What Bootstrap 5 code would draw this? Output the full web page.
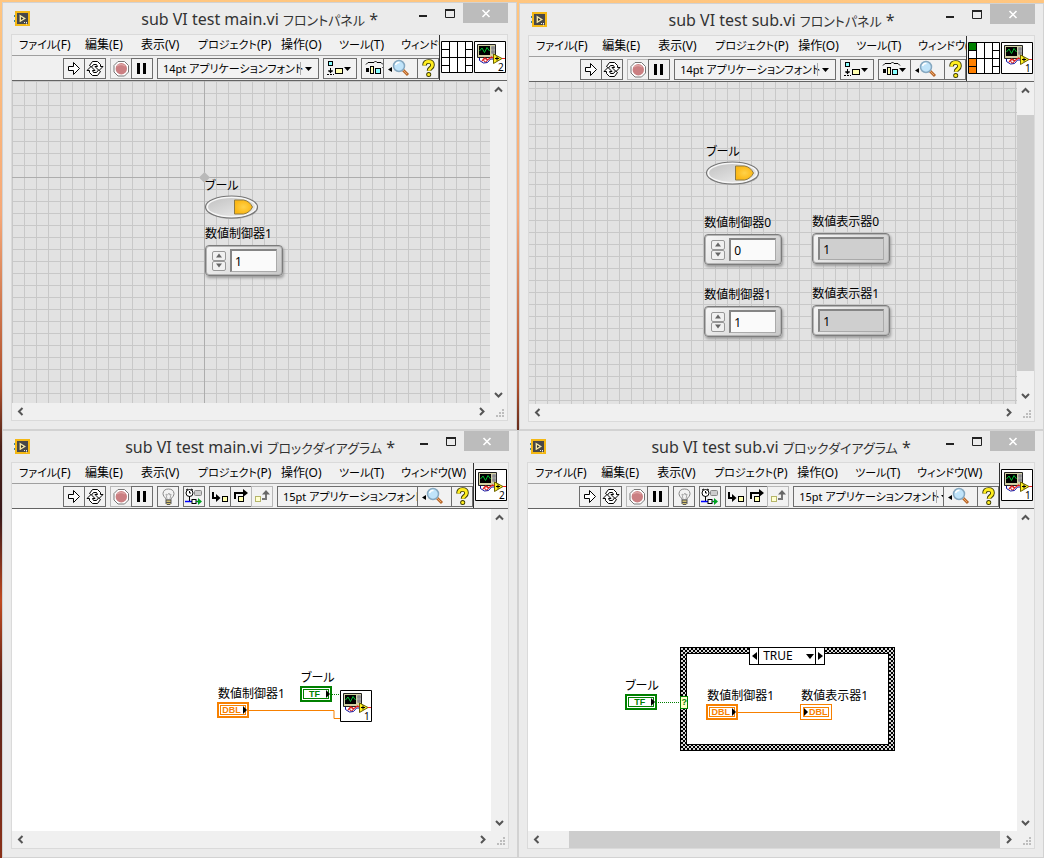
<!DOCTYPE html>
<html lang="ja">
<head>
<meta charset="utf-8">
<meta name="viewport" content="width=device-width, initial-scale=1">
<title>sub VI test</title>
<link href="https://cdn.jsdelivr.net/npm/bootstrap@5.3.0/dist/css/bootstrap.min.css" rel="stylesheet">
<style>
body{font-family:"Noto Sans","Noto Sans CJK JP",sans-serif;font-size:12px;line-height:16px;color:#000;font-feature-settings:"palt";
 background:linear-gradient(180deg,#ffc680 0,#f5a878 25%,#b0502c 45%,#4a2018 52%,#38181a 60%,#c04a20 70%,#5a2218 80%,#8a3018 100%)}
button,input,select{font:inherit;font-feature-settings:inherit;color:inherit;padding:0;border:0;background:none}
svg{display:block}
.desk{min-height:100vh;padding:2px 0 0 2px}
.vi-row{flex:1 1 0}
.row-top{gap:2px}
.win{background:#ebebeb;border:1px solid #d2d2d2;padding:0 8px 8px;min-width:0;display:flex;flex-direction:column}
.win-main{flex:515 1 0}
.win-sub{flex:525 1 0}
.row-top .win-sub{margin-top:1px;padding-bottom:7px}
.title{display:grid;grid-template-columns:1fr auto 1fr;height:31px}
.title h1{font-size:16px;line-height:20px;margin:6px 0 0;font-weight:400;color:#333;white-space:nowrap}
.title .kana{font-size:13px}
.menu .kana{font-size:11px}
.app-ico{margin:8px 0 0 3px}
.caps{display:flex;justify-content:flex-end;height:20px}
.caps button{width:27px;height:20px}
.caps .close-b{width:45px;background:#bcbcbc}
.client{border:1px solid #dadada;flex:1;display:flex;flex-direction:column}
.head{background:#f0f0f0;border-bottom:1px solid #646464;height:46px}
.menu{height:21px;border-bottom:1px solid #a0a0a0;display:grid;grid-template-columns:66px 56px 57px 83px 58px 62px 82px 60px;padding-left:7px;overflow:hidden}
.menu button{text-align:left;white-space:nowrap;line-height:18px;height:20px}
.tools{height:24px;align-items:flex-start;padding-top:2px}
.tools-l{gap:4px;padding-left:51px;overflow:hidden;min-width:0;flex:1}
.tb{height:21px;width:22px;flex:none;border:1px solid #6e6e6e;background:#f2f2f2;display:flex;align-items:center;justify-content:center}
.tb + .tb{margin-left:-1px}
.tb.off{border-color:#b8b8b8}
.tb.wide{width:34px}
.tb.find{width:35px}
.fontbox{position:relative;flex:none;width:162px;height:21px}
.fontbox select{appearance:none;width:100%;height:21px;border:1px solid #6e6e6e;background:#f2f2f2;padding:0 0 0 5px;font-size:11px;line-height:18px;border-radius:0}
.fontbox svg{position:absolute;right:0;top:0;pointer-events:none}
.pane{border-left:1px solid #333;padding:6px 1px 0;gap:1px;flex:none}
.work{flex:1;min-height:322px}
.canvas{position:relative;flex:1;min-width:0;overflow:hidden;background-color:#fff}
.grid{background-color:#e2e2e2;background-image:linear-gradient(#c8c8c8 1px,transparent 1px),linear-gradient(90deg,#c8c8c8 1px,transparent 1px);background-size:12px 12px}
.row-top .win-sub .grid{background-position:6px 6px}
.vbar{width:17px;background:#f0f0f0;display:flex;flex-direction:column;justify-content:space-between;align-items:center;flex:none}
.hbar{height:17px;background:#f0f0f0;display:flex;justify-content:space-between;align-items:center}
.bar-btn{width:17px;height:17px;display:flex;align-items:center;justify-content:center;flex:none}
.thumb{background:#cdcdcd}
.at{position:absolute}
.lbl{white-space:nowrap;line-height:16px;font-size:12px}
.axis-v{width:1px;top:0;bottom:0;background:#adadad}
.axis-h{height:1px;left:0;right:0;background:#adadad}
.num{width:78px;height:31px;border:1px solid #7c7c7c;border-radius:4px;background:linear-gradient(135deg,#f6f6f6,#c9c9c9);box-shadow:1px 2px 3px #9a9a9a,inset 0 0 0 1px #b4b4b4;display:flex;align-items:center;padding:0 5px 0 6px;gap:4px}
.num input{flex:1;min-width:0;height:23px;border:2px solid #858585;border-right:1px solid #aaa;border-bottom:1px solid #aaa;background:#fafafa;padding-left:3px;border-radius:0}
.num.ind{padding:0 5px}
.num.ind input{background:#cfcfcf;padding-left:3px}
.spin{width:14px;flex:none}
.spin button{height:10px;width:14px;border:1px solid #989898;border-radius:2px;background:#f0f0f0;display:flex;align-items:center;justify-content:center}
.node{width:32px;height:16px;border:2px solid;background:#fff;display:flex}
.node span{flex:1;margin:1px;border:1px solid;font:bold 9px/8px "Liberation Sans",sans-serif;text-align:center;padding-right:3px}
.node svg{position:absolute;right:0;top:2px}
.node.tf{color:#008000}
.node.dbl{color:#f78000}
.node.sink{border-width:1px}
.node.sink span{margin:2px;padding:0 0 0 4px}
.node.sink svg{right:auto;left:3px;top:3px}
.case{width:215px;height:104px;border:1px solid #000;padding:5px;background:repeating-conic-gradient(#000 0 25%,#d8d8d8 0 50%) 0 0/4px 4px}
.case-in{height:100%;border:1px solid #000;background:#fff}
.sel{width:76px;height:18px;border:1px solid #000;background:#fff;display:flex;align-items:stretch}
.sel button{width:8px;flex:none;display:flex;align-items:center;justify-content:center}
.sel select{appearance:none;flex:1;min-width:0;border:solid #000;border-width:0 1px;border-radius:0;padding-left:4px;line-height:16px;font-size:12px}
.sel .drop{position:absolute;right:10px;top:6px;pointer-events:none}
.tunnel{width:8px;height:13px;border:1px solid #008000;background:#ffffc8;color:#008000;font:bold 9px/11px "Liberation Sans",sans-serif;text-align:center}
</style>
</head>
<body>
<svg width="0" height="0" class="position-absolute" aria-hidden="true">
<defs>
<symbol id="app" viewBox="0 0 16 16"><path d="M0 5h2M0 10h2M14 8h2" stroke="#3a86a8" stroke-width="2"/><rect x="2" y="1" width="13" height="13" fill="#484848" stroke="#f4b814" stroke-width="2"/><path d="M5 4l6 4-6 4z" fill="#222"/><path d="M5.500 3.500l6.500 4-6.500 4z" fill="#f4e8a8"/><path d="M7 6l2.500 1.500L7 9z" fill="#333"/><path d="M10 11.500h4M12 13h2" stroke="#eee" stroke-dasharray="1 1"/></symbol>
<symbol id="min" viewBox="0 0 27 20"><path d="M10 13h8" stroke="#222" stroke-width="2"/></symbol>
<symbol id="max" viewBox="0 0 27 20"><path d="M9.500 7h9v7.500h-9z" fill="none" stroke="#222"/><path d="M9 7h10" stroke="#222" stroke-width="2"/></symbol>
<symbol id="cls" viewBox="0 0 45 20"><path d="M19.500 7l7 7M26.500 7l-7 7" stroke="#fff" stroke-width="1.600"/></symbol>
<symbol id="run" viewBox="0 0 20 19"><path d="M4.500 7.500h5v-4l6 6-6 6v-4h-5z" fill="#fff" stroke="#000"/></symbol>
<symbol id="cont" viewBox="0 0 20 19"><path d="M4.500 6.500l3-4h5l3 3v2h2.500l-4 4-4-4h2.500l-1-2h-3l-2 2.500z" fill="#fff" stroke="#000"/><path d="M15.500 12.500l-3 4h-5l-3-3v-2H2l4-4 4 4H7.500l1 2h3l2-2.500z" fill="#fff" stroke="#000"/></symbol>
<symbol id="abort" viewBox="0 0 20 19"><path d="M7 2.500h6.500l4 4v6.500l-4 4H7l-4-4V6.500z" fill="#fff" stroke="#777"/><circle cx="10.300" cy="9.800" r="5.700" fill="#cb7f82"/><path d="M6 7q4-3 8 0" stroke="#dda4a4" stroke-width="1.500" fill="none"/></symbol>
<symbol id="pause" viewBox="0 0 20 19"><path d="M5 4h3v11H5zM11 4h3v11h-3z"/></symbol>
<symbol id="bulb" viewBox="0 0 20 19"><path d="M8 13q0-2-2-3.500-1-1.500-1-3 .5-4.500 5.500-4.500t5.500 4.500q0 1.500-1 3Q13 11 13 13z" fill="#f2f2f2" stroke="#888"/><path d="M9 12l-1-5 1.500 1L11 6l.8 2L13 7l-1 5" fill="none" stroke="#aaa"/><path d="M8 13h5v3.500l-1 1H9l-1-1z" fill="#d2c070" stroke="#555"/><path d="M8 15.500h5" stroke="#555"/></symbol>
<symbol id="retain" viewBox="0 0 20 19"><circle cx="5.500" cy="6" r="3.500" fill="#fff" stroke="#000"/><path d="M5.500 4v2H7M2 3l2-1M9 3L7 2M5.500 9v5" stroke="#000" fill="none"/><rect x="10.500" y="3.500" width="7" height="5" rx="1" fill="#ccc" stroke="#888"/><path d="M1 14.500h15" stroke="#00f" stroke-width="1.500"/><rect x="8" y="12.500" width="4" height="4" fill="#fff" stroke="#000"/><path d="M12 14.500h3" stroke="#090"/><path d="M14 11l4 3.500-4 3.500z" fill="#00a020"/></symbol>
<symbol id="into" viewBox="0 0 20 19"><path d="M3 5v6h4" stroke="#000" stroke-width="2" fill="none"/><path d="M6 7l4.500 4L6 15z"/><rect x="12.500" y="9.500" width="5" height="5" fill="#ffffb0" stroke="#000"/></symbol>
<symbol id="over" viewBox="0 0 20 19"><path d="M4 12V6h9" stroke="#000" stroke-width="2" fill="none"/><path d="M12 2l5 4-5 4z"/><rect x="7.500" y="9.500" width="5" height="5" fill="#ffffb0" stroke="#000"/></symbol>
<symbol id="out" viewBox="0 0 20 19"><rect x="3.500" y="9.500" width="5" height="5" fill="#ffffd0" stroke="#b5b56a"/><path d="M10 12h4V6" stroke="#777" stroke-width="2" fill="none"/><path d="M10 7.500L14 3l4 4.500z" fill="#666"/></symbol>
<symbol id="align" viewBox="0 0 32 19"><rect x="4.500" y="2.500" width="4" height="4" fill="#8ff" stroke="#000"/><path d="M6.500 9v5M4 12h5" stroke="#000"/><path d="M4.500 11.500h4l-2 3zM20 8h7l-3.500 4z"/><path d="M3 15.500h7" stroke="#000" stroke-dasharray="2 1"/><rect x="11.500" y="9.500" width="7" height="5" fill="#ffffb0" stroke="#000"/></symbol>
<symbol id="dist" viewBox="0 0 32 19"><path d="M4 5.500L6 3.500h6L13.500 2l1.500 1.500h4l2 2" stroke="#000" fill="none"/><path d="M4 9h3v4H4zM20 8h7l-3.500 4z"/><rect x="8.500" y="7.500" width="3" height="7" fill="#ffffb0" stroke="#000"/><rect x="13.500" y="9.500" width="5" height="5" fill="#8ff" stroke="#000"/></symbol>
<symbol id="find" viewBox="0 0 33 19"><path d="M4 10.500l4-2.500v5z"/><path d="M18 10l6 6" stroke="#b8682c" stroke-width="3"/><path d="M18 10l5 5" stroke="#f0a868"/><circle cx="15" cy="7" r="5.500" fill="#c0e4fa" stroke="#86a8c0" stroke-width="1.500"/><path d="M11.500 6q1-3 4-2.500" stroke="#fff" stroke-width="1.500" fill="none"/></symbol>
<symbol id="help" viewBox="0 0 20 19"><path d="M6.500 6.500q0-4 4-4t4 3.500q0 2-2 3.300-1.500 1-1.500 2.500" stroke="#3a3a00" stroke-width="4.600" fill="none"/><circle cx="10.700" cy="15.500" r="2.500" fill="#3a3a00"/><path d="M6.500 6.500q0-4 4-4t4 3.500q0 2-2 3.300-1.500 1-1.500 2.500" stroke="#ffed20" stroke-width="2.800" fill="none"/><circle cx="10.700" cy="15.500" r="1.600" fill="#ffed20"/></symbol>
<symbol id="drop" viewBox="0 0 20 21"><path d="M1.500 4v13" stroke="#aaa"/><path d="M6 9h7l-3.500 4z"/></symbol>
<symbol id="vi" viewBox="0 0 32 32"><path d="M.5.5h31v31H.5z" fill="#fff" stroke="#000"/><path d="M3.500 3.500h18v13h-18z" fill="#d2d0a4" stroke="#222"/><path d="M5 5h11v9H5z" fill="#000"/><path d="M5.500 10l2.500-3 2.500 4.500L13 6.500l2.500 3.500" fill="none" stroke="#00c030"/><path d="M17 5h4v8h-4z" fill="#aaa"/><circle cx="19" cy="7" r="1" fill="#fff" stroke="#444" stroke-width=".7"/><circle cx="19" cy="11" r="1" fill="#fff" stroke="#444" stroke-width=".7"/><path d="M5.500 17v2.500l4 2.500 4-.5 3-3.500h3" fill="none" stroke="#1010a0"/><path d="M8 20l2.500-3 3 2 4-3 2 1M28 17.500h3" fill="none" stroke="#f02020" stroke-width="1.200"/><circle cx="11.500" cy="19" r="1.800" fill="none" stroke="#d02020"/><path d="M19.500 13v9.500l8.500-5z" fill="#ffef20" stroke="#6b6200"/><path d="M21 17.500h4M23 15.500v4" stroke="#000"/></symbol>
<symbol id="conn" viewBox="0 0 32 32"><path d="M.5.500h31v31H.5z" fill="#fff" stroke="none"/><path d="M.5.500h31v31H.5zM8.500 0v32M16.500 0v32M24.500 0v32M0 16.500h32M0 8.500h8.500M0 24.500h8.500M24.500 8.500H32M24.500 24.500H32" fill="none" stroke="#000"/></symbol>
<symbol id="up" viewBox="0 0 17 17"><path d="M5 10.500l3.500-3.500 3.500 3.500" fill="none" stroke="#555" stroke-width="2"/></symbol>
<symbol id="dn" viewBox="0 0 17 17"><path d="M5 7l3.500 3.500L12 7" fill="none" stroke="#555" stroke-width="2"/></symbol>
<symbol id="lf" viewBox="0 0 17 17"><path d="M10.500 5L7 8.500l3.500 3.500" fill="none" stroke="#555" stroke-width="2"/></symbol>
<symbol id="rt" viewBox="0 0 17 17"><path d="M7 5l3.500 3.500L7 12" fill="none" stroke="#555" stroke-width="2"/></symbol>
<symbol id="grip" viewBox="0 0 17 17"><path d="M12 6h2v2h-2zM9 9h2v2H9zM12 9h2v2h-2zM6 12h2v2H6zM9 12h2v2H9zM12 12h2v2h-2z" fill="#bdbdbd"/></symbol>
<symbol id="tu" viewBox="0 0 8 5"><path d="M1 4.500h6L4 .5z" fill="#666"/></symbol>
<symbol id="td" viewBox="0 0 8 5"><path d="M1 .5h6L4 4.500z" fill="#666"/></symbol>
<symbol id="term" viewBox="0 0 4 8"><path d="M0 0l4 4-4 4z" fill="#000"/></symbol>
<symbol id="oval" viewBox="0 0 54 24"><ellipse cx="27" cy="13" rx="26" ry="11" fill="#b5b5b5"/><ellipse cx="26.500" cy="12" rx="26" ry="11" fill="#f6f6f6" stroke="#757575" stroke-width="1.200"/><ellipse cx="26.500" cy="12" rx="23.500" ry="9" fill="url(#gg)"/><path d="M29.500 5h9q6 1 9 7-3 6-9 7h-9z" fill="url(#yy)" stroke="#8d7a45"/></symbol>
<linearGradient id="gg" x1="0" y1="0" x2="1" y2="1"><stop offset="0" stop-color="#c2c2c2"/><stop offset="1" stop-color="#eee"/></linearGradient>
<radialGradient id="yy"><stop offset="0" stop-color="#ffd24a"/><stop offset="1" stop-color="#fbb714"/></radialGradient>
</defs>
</svg>

<main class="desk d-flex flex-column">
<div class="vi-row row-top d-flex">

<section class="win win-main">
 <header class="title">
  <svg class="app-ico" width="16" height="16"><use href="#app"/></svg>
  <h1>sub VI test main.vi <span class="kana">フロントパネル</span> *</h1>
  <div class="caps"><button aria-label="最小化"><svg width="27" height="20"><use href="#min"/></svg></button><button aria-label="最大化"><svg width="27" height="20"><use href="#max"/></svg></button><button class="close-b" aria-label="閉じる"><svg width="45" height="20"><use href="#cls"/></svg></button></div>
 </header>
 <div class="client">
  <div class="head d-flex">
   <div class="flex-fill overflow-hidden">
    <nav class="menu"><button><span class="kana">ファイル</span>(F)</button><button>編集(E)</button><button>表示(V)</button><button><span class="kana">プロジェクト</span>(P)</button><button>操作(O)</button><button><span class="kana">ツール</span>(T)</button><button><span class="kana">ウィンドウ</span>(W)</button></nav>
    <div class="tools d-flex">
     <div class="tools-l d-flex">
      <div class="d-flex"><button class="tb" aria-label="実行"><svg width="20" height="19"><use href="#run"/></svg></button><button class="tb" aria-label="連続実行"><svg width="20" height="19"><use href="#cont"/></svg></button></div>
      <div class="d-flex"><button class="tb off" aria-label="中断"><svg width="20" height="19"><use href="#abort"/></svg></button><button class="tb" aria-label="一時停止"><svg width="20" height="19"><use href="#pause"/></svg></button></div>
      <div class="fontbox"><select aria-label="フォント"><option>14pt アプリケーションフォント</option></select><svg width="20" height="21"><use href="#drop"/></svg></div>
      <button class="tb wide m-0" aria-label="整列"><svg width="32" height="19"><use href="#align"/></svg></button>
      <button class="tb wide m-0" aria-label="間隔"><svg width="32" height="19"><use href="#dist"/></svg></button>
     </div>
     <button class="tb find" aria-label="検索"><svg width="33" height="19"><use href="#find"/></svg></button><button class="tb" aria-label="ヘルプ"><svg width="20" height="19"><use href="#help"/></svg></button>
    </div>
   </div>
   <div class="pane d-flex"><svg width="32" height="32"><use href="#conn"/></svg><svg width="32" height="32"><use href="#vi"/><text x="24" y="30" font-size="10">2</text></svg></div>
  </div>
  <div class="work d-flex">
   <div class="canvas grid">
    <div class="at axis-v" style="left:192px"></div><div class="at axis-h" style="top:96px"></div>
    <svg class="at" style="left:187px;top:91px" width="11" height="11"><path d="M5.500 0L11 5.500 5.500 11 0 5.500z" fill="#b9b9b9"/></svg>
    <span class="at lbl" id="m-bool" style="left:193px;top:97px">ブール</span>
    <button class="at" aria-labelledby="m-bool" style="left:193px;top:114px"><svg width="54" height="24"><use href="#oval"/></svg></button>
    <label class="at lbl" for="m1" style="left:193px;top:145px">数値制御器1</label>
    <div class="at num" style="left:193px;top:164px"><div class="spin"><button aria-label="増加"><svg width="8" height="5"><use href="#tu"/></svg></button><button aria-label="減少"><svg width="8" height="5"><use href="#td"/></svg></button></div><input id="m1" value="1"></div>
   </div>
   <div class="vbar"><button class="bar-btn" aria-label="上"><svg width="17" height="17"><use href="#up"/></svg></button><button class="bar-btn" aria-label="下"><svg width="17" height="17"><use href="#dn"/></svg></button></div>
  </div>
  <div class="hbar"><button class="bar-btn" aria-label="左"><svg width="17" height="17"><use href="#lf"/></svg></button><div class="flex-fill"></div><button class="bar-btn" aria-label="右"><svg width="17" height="17"><use href="#rt"/></svg></button><svg width="17" height="17"><use href="#grip"/></svg></div>
 </div>
</section>

<section class="win win-sub">
 <header class="title">
  <svg class="app-ico" width="16" height="16"><use href="#app"/></svg>
  <h1>sub VI test sub.vi <span class="kana">フロントパネル</span> *</h1>
  <div class="caps"><button aria-label="最小化"><svg width="27" height="20"><use href="#min"/></svg></button><button aria-label="最大化"><svg width="27" height="20"><use href="#max"/></svg></button><button class="close-b" aria-label="閉じる"><svg width="45" height="20"><use href="#cls"/></svg></button></div>
 </header>
 <div class="client">
  <div class="head d-flex">
   <div class="flex-fill overflow-hidden">
    <nav class="menu"><button><span class="kana">ファイル</span>(F)</button><button>編集(E)</button><button>表示(V)</button><button><span class="kana">プロジェクト</span>(P)</button><button>操作(O)</button><button><span class="kana">ツール</span>(T)</button><button><span class="kana">ウィンドウ</span>(W)</button></nav>
    <div class="tools d-flex">
     <div class="tools-l d-flex">
      <div class="d-flex"><button class="tb" aria-label="実行"><svg width="20" height="19"><use href="#run"/></svg></button><button class="tb" aria-label="連続実行"><svg width="20" height="19"><use href="#cont"/></svg></button></div>
      <div class="d-flex"><button class="tb off" aria-label="中断"><svg width="20" height="19"><use href="#abort"/></svg></button><button class="tb" aria-label="一時停止"><svg width="20" height="19"><use href="#pause"/></svg></button></div>
      <div class="fontbox"><select aria-label="フォント"><option>14pt アプリケーションフォント</option></select><svg width="20" height="21"><use href="#drop"/></svg></div>
      <button class="tb wide m-0" aria-label="整列"><svg width="32" height="19"><use href="#align"/></svg></button>
      <button class="tb wide m-0" aria-label="間隔"><svg width="32" height="19"><use href="#dist"/></svg></button>
     </div>
     <button class="tb find" aria-label="検索"><svg width="33" height="19"><use href="#find"/></svg></button><button class="tb" aria-label="ヘルプ"><svg width="20" height="19"><use href="#help"/></svg></button>
    </div>
   </div>
   <div class="pane d-flex"><svg width="32" height="32"><use href="#conn"/><path d="M1 1h7v7H1z" fill="#008000"/><path d="M1 17h7v7H1zM1 25h7v6H1z" fill="#ff8000"/></svg><svg width="32" height="32"><use href="#vi"/><text x="24" y="30" font-size="10">1</text></svg></div>
  </div>
  <div class="work d-flex">
   <div class="canvas grid">
    <span class="at lbl" id="s-bool" style="left:177px;top:62px">ブール</span>
    <button class="at" aria-labelledby="s-bool" style="left:177px;top:79px"><svg width="54" height="24"><use href="#oval"/></svg></button>
    <label class="at lbl" for="c0" style="left:175px;top:133px">数値制御器0</label>
    <div class="at num" style="left:175px;top:152px"><div class="spin"><button aria-label="増加"><svg width="8" height="5"><use href="#tu"/></svg></button><button aria-label="減少"><svg width="8" height="5"><use href="#td"/></svg></button></div><input id="c0" value="0"></div>
    <label class="at lbl" for="i0" style="left:283px;top:132px">数値表示器0</label>
    <div class="at num ind" style="left:283px;top:151px"><input id="i0" value="1" readonly></div>
    <label class="at lbl" for="c1" style="left:175px;top:205px">数値制御器1</label>
    <div class="at num" style="left:175px;top:224px"><div class="spin"><button aria-label="増加"><svg width="8" height="5"><use href="#tu"/></svg></button><button aria-label="減少"><svg width="8" height="5"><use href="#td"/></svg></button></div><input id="c1" value="1"></div>
    <label class="at lbl" for="i1" style="left:283px;top:204px">数値表示器1</label>
    <div class="at num ind" style="left:283px;top:223px"><input id="i1" value="1" readonly></div>
   </div>
   <div class="vbar"><button class="bar-btn" aria-label="上"><svg width="17" height="17"><use href="#up"/></svg></button><div class="thumb flex-fill align-self-stretch my-3"></div><button class="bar-btn" aria-label="下"><svg width="17" height="17"><use href="#dn"/></svg></button></div>
  </div>
  <div class="hbar"><button class="bar-btn" aria-label="左"><svg width="17" height="17"><use href="#lf"/></svg></button><div class="flex-fill"></div><button class="bar-btn" aria-label="右"><svg width="17" height="17"><use href="#rt"/></svg></button><svg width="17" height="17"><use href="#grip"/></svg></div>
 </div>
</section>
</div>

<div class="vi-row d-flex">
<section class="win win-main">
 <header class="title">
  <svg class="app-ico" width="16" height="16"><use href="#app"/></svg>
  <h1>sub VI test main.vi <span class="kana">ブロックダイアグラム</span> *</h1>
  <div class="caps"><button aria-label="最小化"><svg width="27" height="20"><use href="#min"/></svg></button><button aria-label="最大化"><svg width="27" height="20"><use href="#max"/></svg></button><button class="close-b" aria-label="閉じる"><svg width="45" height="20"><use href="#cls"/></svg></button></div>
 </header>
 <div class="client">
  <div class="head d-flex">
   <div class="flex-fill overflow-hidden">
    <nav class="menu"><button><span class="kana">ファイル</span>(F)</button><button>編集(E)</button><button>表示(V)</button><button><span class="kana">プロジェクト</span>(P)</button><button>操作(O)</button><button><span class="kana">ツール</span>(T)</button><button><span class="kana">ウィンドウ</span>(W)</button></nav>
    <div class="tools d-flex">
     <div class="tools-l d-flex">
      <div class="d-flex"><button class="tb" aria-label="実行"><svg width="20" height="19"><use href="#run"/></svg></button><button class="tb" aria-label="連続実行"><svg width="20" height="19"><use href="#cont"/></svg></button></div>
      <div class="d-flex"><button class="tb off" aria-label="中断"><svg width="20" height="19"><use href="#abort"/></svg></button><button class="tb" aria-label="一時停止"><svg width="20" height="19"><use href="#pause"/></svg></button></div>
      <button class="tb m-0" aria-label="実行のハイライト"><svg width="20" height="19"><use href="#bulb"/></svg></button>
      <button class="tb m-0" aria-label="ワイヤ値を保持"><svg width="20" height="19"><use href="#retain"/></svg></button>
      <div class="d-flex"><button class="tb" aria-label="ステップイン"><svg width="20" height="19"><use href="#into"/></svg></button><button class="tb" aria-label="ステップオーバー"><svg width="20" height="19"><use href="#over"/></svg></button><button class="tb off" aria-label="ステップアウト"><svg width="20" height="19"><use href="#out"/></svg></button></div>
      <div class="fontbox"><select aria-label="フォント"><option>15pt アプリケーションフォント</option></select><svg width="20" height="21"><use href="#drop"/></svg></div>
     </div>
     <button class="tb find" aria-label="検索"><svg width="33" height="19"><use href="#find"/></svg></button><button class="tb" aria-label="ヘルプ"><svg width="20" height="19"><use href="#help"/></svg></button>
    </div>
   </div>
   <div class="pane d-flex"><svg width="32" height="32"><use href="#vi"/><text x="24" y="30" font-size="10">2</text></svg></div>
  </div>
  <div class="work d-flex">
   <div class="canvas">
    <svg class="at" style="left:236px;top:180px" width="94" height="34"><path d="M0 21.500h86v8h8" fill="none" stroke="#f78000"/><path d="M84 5.500h10" stroke="#008000" stroke-dasharray="1 1"/></svg>
    <span class="at lbl" style="left:289px;top:161px">ブール</span>
    <div class="at node tf" style="left:288px;top:177px"><span>TF</span><svg width="4" height="8"><use href="#term"/></svg></div>
    <span class="at lbl" style="left:206px;top:177px">数値制御器1</span>
    <div class="at node dbl" style="left:205px;top:193px"><span>DBL</span><svg width="4" height="8"><use href="#term"/></svg></div>
    <svg class="at" style="left:328px;top:181px" width="32" height="32"><use href="#vi"/><text x="24" y="30" font-size="10">1</text></svg>
   </div>
   <div class="vbar"><button class="bar-btn" aria-label="上"><svg width="17" height="17"><use href="#up"/></svg></button><button class="bar-btn" aria-label="下"><svg width="17" height="17"><use href="#dn"/></svg></button></div>
  </div>
  <div class="hbar"><button class="bar-btn" aria-label="左"><svg width="17" height="17"><use href="#lf"/></svg></button><div class="flex-fill"></div><button class="bar-btn" aria-label="右"><svg width="17" height="17"><use href="#rt"/></svg></button><svg width="17" height="17"><use href="#grip"/></svg></div>
 </div>
</section>

<section class="win win-sub">
 <header class="title">
  <svg class="app-ico" width="16" height="16"><use href="#app"/></svg>
  <h1>sub VI test sub.vi <span class="kana">ブロックダイアグラム</span> *</h1>
  <div class="caps"><button aria-label="最小化"><svg width="27" height="20"><use href="#min"/></svg></button><button aria-label="最大化"><svg width="27" height="20"><use href="#max"/></svg></button><button class="close-b" aria-label="閉じる"><svg width="45" height="20"><use href="#cls"/></svg></button></div>
 </header>
 <div class="client">
  <div class="head d-flex">
   <div class="flex-fill overflow-hidden">
    <nav class="menu"><button><span class="kana">ファイル</span>(F)</button><button>編集(E)</button><button>表示(V)</button><button><span class="kana">プロジェクト</span>(P)</button><button>操作(O)</button><button><span class="kana">ツール</span>(T)</button><button><span class="kana">ウィンドウ</span>(W)</button><button><span class="kana">ヘルプ</span>(H)</button></nav>
    <div class="tools d-flex">
     <div class="tools-l d-flex">
      <div class="d-flex"><button class="tb" aria-label="実行"><svg width="20" height="19"><use href="#run"/></svg></button><button class="tb" aria-label="連続実行"><svg width="20" height="19"><use href="#cont"/></svg></button></div>
      <div class="d-flex"><button class="tb off" aria-label="中断"><svg width="20" height="19"><use href="#abort"/></svg></button><button class="tb" aria-label="一時停止"><svg width="20" height="19"><use href="#pause"/></svg></button></div>
      <button class="tb m-0" aria-label="実行のハイライト"><svg width="20" height="19"><use href="#bulb"/></svg></button>
      <button class="tb m-0" aria-label="ワイヤ値を保持"><svg width="20" height="19"><use href="#retain"/></svg></button>
      <div class="d-flex"><button class="tb" aria-label="ステップイン"><svg width="20" height="19"><use href="#into"/></svg></button><button class="tb" aria-label="ステップオーバー"><svg width="20" height="19"><use href="#over"/></svg></button><button class="tb off" aria-label="ステップアウト"><svg width="20" height="19"><use href="#out"/></svg></button></div>
      <div class="fontbox"><select aria-label="フォント"><option>15pt アプリケーションフォント</option></select><svg width="20" height="21"><use href="#drop"/></svg></div>
     </div>
     <button class="tb find" aria-label="検索"><svg width="33" height="19"><use href="#find"/></svg></button><button class="tb" aria-label="ヘルプ"><svg width="20" height="19"><use href="#help"/></svg></button>
    </div>
   </div>
   <div class="pane d-flex"><svg width="32" height="32"><use href="#vi"/><text x="24" y="30" font-size="10">1</text></svg></div>
  </div>
  <div class="work d-flex">
   <div class="canvas">
    <div class="at case" style="left:152px;top:138px"><div class="case-in"></div></div>
    <div class="at sel" style="left:221px;top:138px"><button aria-label="前のケース"><svg width="5" height="8"><path d="M5 0L0 4l5 4z"/></svg></button><select aria-label="ケース"><option>TRUE</option></select><svg class="drop" width="8" height="5"><path d="M0 0h8L4 5z"/></svg><button aria-label="次のケース"><svg width="5" height="8"><path d="M0 0l5 4-5 4z"/></svg></button></div>
    <svg class="at" style="left:128px;top:190px" width="146" height="16"><path d="M0 3.500h26" stroke="#008000" stroke-dasharray="1 1"/><path d="M82 13.500h63" stroke="#f78000"/></svg>
    <span class="at lbl" style="left:97px;top:169px">ブール</span>
    <div class="at node tf" style="left:97px;top:185px"><span>TF</span><svg width="4" height="8"><use href="#term"/></svg></div>
    <div class="at tunnel" style="left:152px;top:187px">?</div>
    <span class="at lbl" style="left:179px;top:179px">数値制御器1</span>
    <div class="at node dbl" style="left:178px;top:195px"><span>DBL</span><svg width="4" height="8"><use href="#term"/></svg></div>
    <span class="at lbl" style="left:273px;top:179px">数値表示器1</span>
    <div class="at node dbl sink" style="left:272px;top:195px"><span>DBL</span><svg width="4" height="8"><use href="#term"/></svg></div>
   </div>
   <div class="vbar"><button class="bar-btn" aria-label="上"><svg width="17" height="17"><use href="#up"/></svg></button><button class="bar-btn" aria-label="下"><svg width="17" height="17"><use href="#dn"/></svg></button></div>
  </div>
  <div class="hbar"><button class="bar-btn" aria-label="左"><svg width="17" height="17"><use href="#lf"/></svg></button><div class="thumb h-100 flex-fill ms-4"></div><button class="bar-btn" aria-label="右"><svg width="17" height="17"><use href="#rt"/></svg></button><svg width="17" height="17"><use href="#grip"/></svg></div>
 </div>
</section>
</div>
</main>
<script src="https://cdn.jsdelivr.net/npm/bootstrap@5.3.0/dist/js/bootstrap.bundle.min.js"></script>
</body>
</html>
